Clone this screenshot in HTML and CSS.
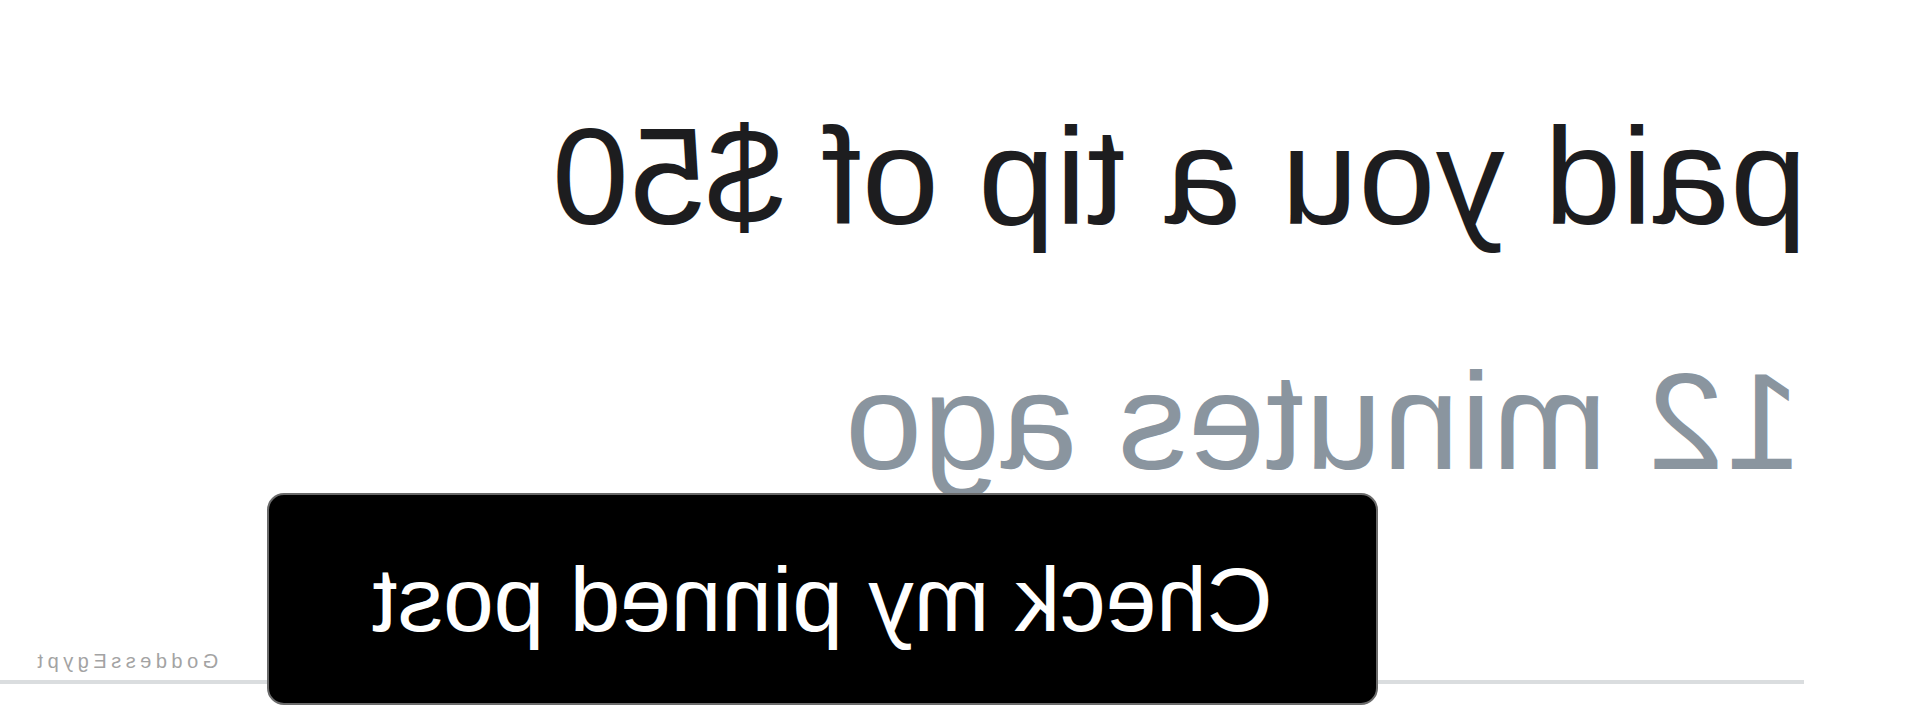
FILE: index.html
```html
<!DOCTYPE html>
<html lang="en">
<head>
<meta charset="utf-8">
<title>Tip notification</title>
<link rel="stylesheet" href="styles.css">
</head>
<body>
<main class="stage">
  <section class="notice">
    <p class="tip">paid you a tip of $50</p>
    <p class="time">12 minutes ago</p>
    <footer class="foot">
      <div class="mark">GoddessEgypt</div>
      <div class="rule"></div>
    </footer>
  </section>
  <div class="pinned">Check my pinned post</div>
</main>
</body>
</html>
```

FILE: styles.css
```css
html, body {
  margin: 0;
  padding: 0;
  background: #ffffff;
}

body {
  width: 1919px;
  height: 721px;
  overflow: hidden;
  font-family: "Liberation Sans", Arial, sans-serif;
}

.stage {
  position: relative;
  width: 1919px;
  height: 721px;
  overflow: hidden;
  transform: scaleX(-1);
  background: #ffffff;
}

.notice {
  display: flex;
  flex-direction: column;
  padding-left: 112px;
}

.tip {
  margin: 107px 0 0 0;
  font-size: 138px;
  line-height: 1;
  letter-spacing: 0.6px;
  color: #1d1d1f;
  white-space: nowrap;
}

.time {
  margin: 107px 0 0 5px;
  font-size: 138px;
  line-height: 1;
  letter-spacing: 1px;
  color: #8a959f;
  white-space: nowrap;
}

.foot {
  display: flex;
  flex-direction: column;
  margin-top: 161px;
  margin-left: 3px;
}

.mark {
  align-self: flex-end;
  margin-right: 33px;
  font-size: 20px;
  line-height: 20px;
  letter-spacing: 4.5px;
  color: #a3a3a3;
}

.rule {
  margin-top: 9px;
  height: 4px;
  background: #dadddf;
}

.pinned {
  position: absolute;
  left: 541px;
  top: 493px;
  width: 1111px;
  height: 212px;
  box-sizing: border-box;
  border: 2px solid #6a6a6a;
  border-radius: 17px;
  background: #000000;
  color: #ffffff;
  font-size: 91px;
  line-height: 1;
  display: flex;
  align-items: center;
  justify-content: center;
  white-space: nowrap;
}
```
